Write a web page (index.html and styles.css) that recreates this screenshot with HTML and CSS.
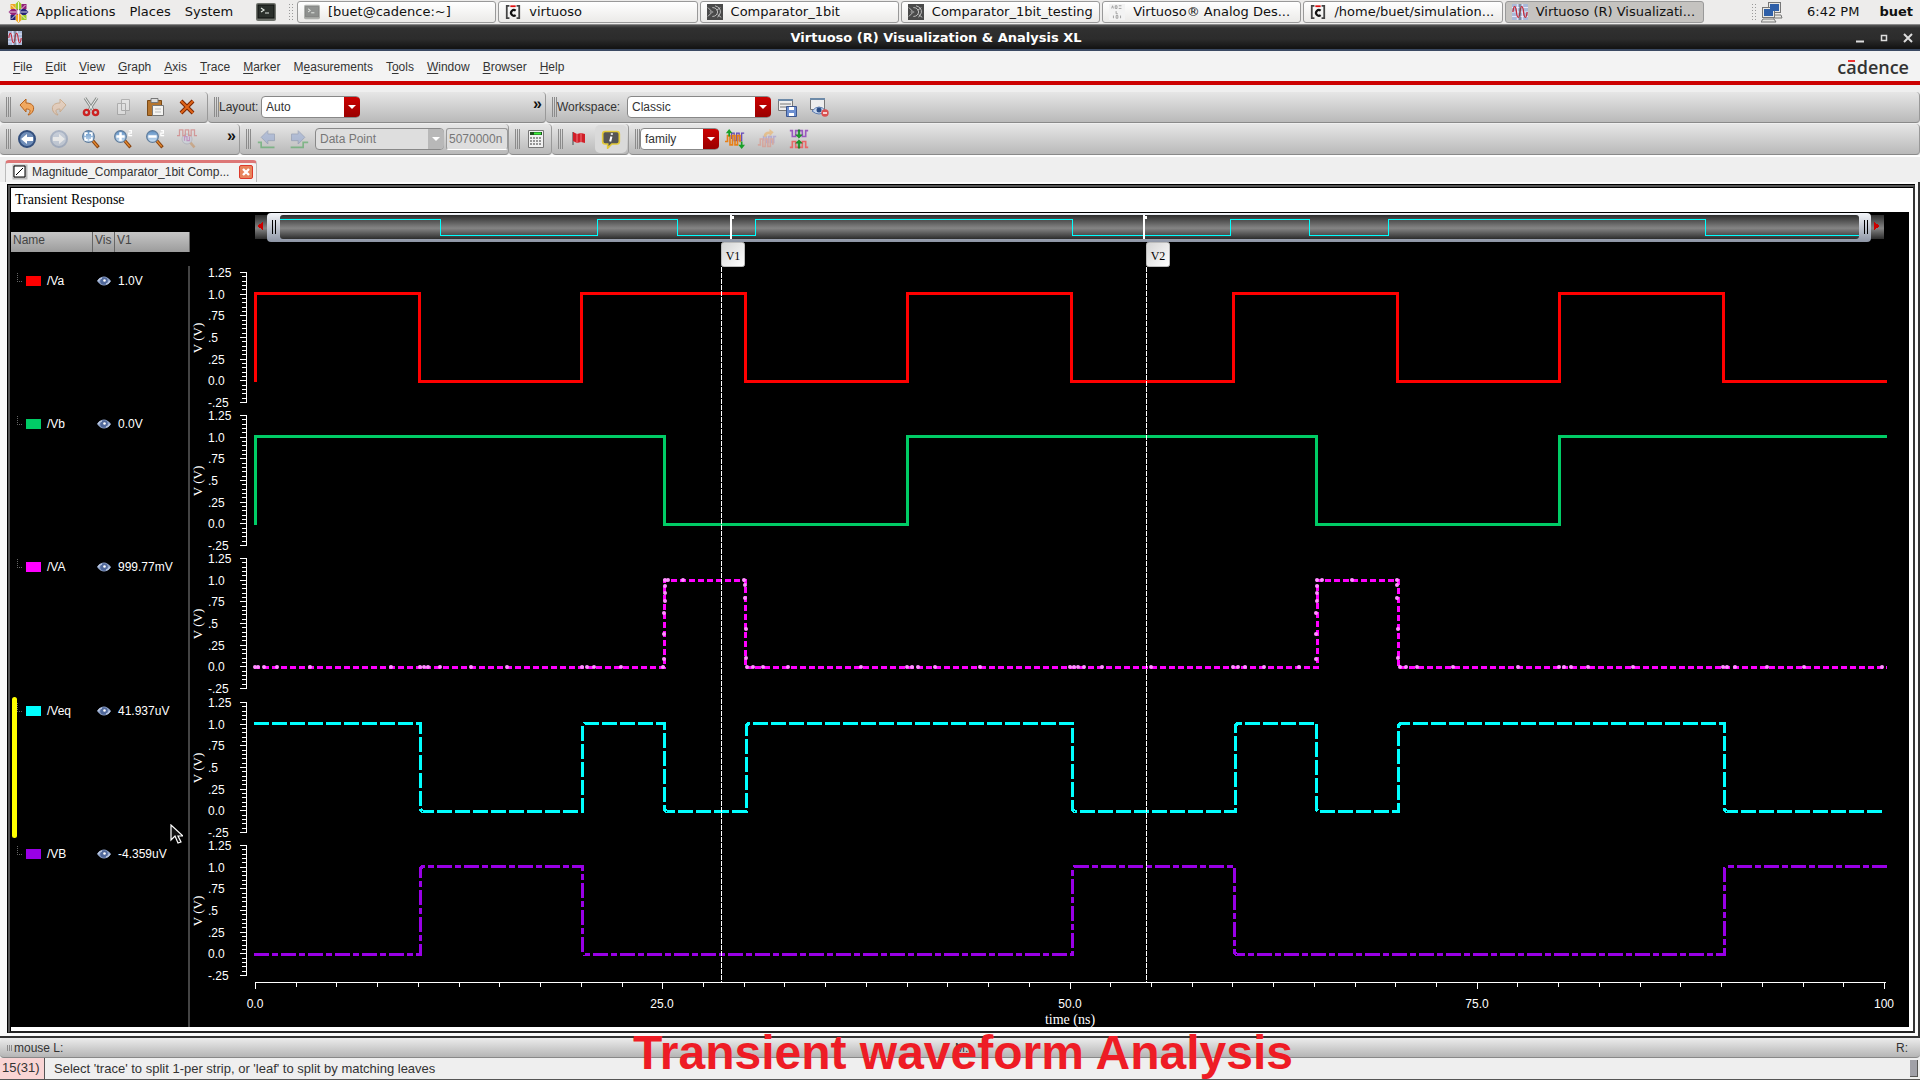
FILE: index.html
```html
<!DOCTYPE html>
<html lang="en">
<head>
<meta charset="utf-8">
<title>Virtuoso (R) Visualization &amp; Analysis XL</title>
<link rel="stylesheet" href="styles.css">
</head>
<body>
<svg class="defs" aria-hidden="true">
  <defs>
    <linearGradient id="lens" x1="0" y1="0" x2="0" y2="1"><stop offset="0" stop-color="#5d8fc4"/><stop offset="1" stop-color="#cfe2f3"/></linearGradient>
    <linearGradient id="slot" x1="0" y1="0" x2="0" y2="1"><stop offset="0" stop-color="#2c2c2c"/><stop offset=".55" stop-color="#858585"/><stop offset="1" stop-color="#2c2c2c"/></linearGradient>
    <linearGradient id="chrome" x1="0" y1="0" x2="0" y2="1"><stop offset="0" stop-color="#f4f6fa"/><stop offset="1" stop-color="#8d95a5"/></linearGradient>
    <linearGradient id="flagfill" x1="0" y1="0" x2="1" y2="1"><stop offset="0" stop-color="#d4d4d4"/><stop offset="1" stop-color="#fff"/></linearGradient>
    <symbol id="i-term" viewBox="0 0 20 20"><rect x="0" y="1" width="20" height="18" rx="2" fill="#6f736d"/><rect x="2" y="3" width="16" height="13" fill="#2b302c" stroke="#101210"/><path d="M5 6l3 2-3 2M9 11h4" fill="none" stroke="#dfe6df" stroke-width="1.2"/></symbol>
    <symbol id="i-cad" viewBox="0 0 18 18"><path d="M5 2H2v14h3M13 2h3v14h-3" fill="none" stroke="#444" stroke-width="2"/><path d="M12 7.500a3.200 3.200 0 1 0 0 5" fill="none" stroke="#111" stroke-width="2.400"/><path d="M6 2.500h6" stroke="#e01010" stroke-width="2"/></symbol>
    <symbol id="i-gate" viewBox="0 0 18 18"><rect width="18" height="18" fill="#4a4a4a"/><path d="M1 4l4 4M1 14l4-4M3 9h4M6 4q5 0 6 5-1 5-6 5M9 2q7 2 6 8l-3 5M11 7l4-3M12 12l4 3" fill="none" stroke="#ccc"/></symbol>
    <symbol id="i-wave" viewBox="0 0 18 18"><rect width="18" height="18" fill="#a9b9d8"/><path d="M0 4h18M0 9h18M0 14h18M6 0v18M12 0v18" stroke="#eef" stroke-width="1"/><path d="M1 9c1-8 3-8 4 0s3 8 4 0 3-8 4 0 3 8 4 0" fill="none" stroke="#c22c3c" stroke-width="1.500"/><path d="M9 0v18" stroke="#555"/></symbol>
    <symbol id="i-ade" viewBox="0 0 18 18"><rect width="18" height="18" fill="#f3f3f3"/><path d="M3 5l1-3 1 3M7 2v3h2V2zM11 2h3M11 5h3M8 8v3h2M5 13v3M8 13h2v3H8zM13 13v3" fill="none" stroke="#999"/></symbol>
    <symbol id="i-mag" viewBox="0 0 24 24"><path d="M14 14l7 8" stroke="#8a4513" stroke-width="4"/><path d="M14 14l6 7" stroke="#e88b2e" stroke-width="1.500"/><circle cx="9" cy="9" r="7" fill="url(#lens)" stroke="#5f7c9c" stroke-width="1.500"/></symbol>
    <symbol id="i-eye" viewBox="0 0 14 10"><path d="M0 5q7-9 14 0q-7 9-14 0z" fill="#8fa3c8"/><circle cx="7" cy="5" r="3.800" fill="#50689a"/><circle cx="7.500" cy="4.500" r="1.300" fill="#fff"/><path d="M1 5q2-3 4-3M13 5q-2 3-4 3" stroke="#b8c6e0" fill="none" stroke-width="1.500"/></symbol>
  </defs>
</svg>

<header class="panel">
  <nav class="panel-menu" aria-label="Desktop">
    <svg class="logo" viewBox="0 0 20 22"><path d="M10 0l3 3v6H7V3z" fill="#9ccd2a"/><path d="M20 11l-3 3h-6V8h6z" fill="#262577"/><path d="M10 22l-3-3v-6h6v6z" fill="#efa724"/><path d="M0 11l3-3h6v6H3z" fill="#932279"/><path d="M2 3h5v5H2z" fill="#efa724"/><path d="M13 3h5v5h-5z" fill="#932279"/><path d="M18 19h-5v-5h5z" fill="#9ccd2a"/><path d="M2 19v-5h5v5z" fill="#262577"/><path d="M10 1v20M1 11h18M3 4l14 14M17 4L3 18" stroke="#fff" stroke-width=".8"/></svg>
    <a href="#applications">Applications</a><a href="#places">Places</a><a href="#system">System</a>
    <svg class="term"><use href="#i-term"/></svg>
  </nav>
  <span class="dots"></span>
  <div class="tasks">
    <button><svg class="dim"><use href="#i-term"/></svg><span>[buet@cadence:~]</span></button>
    <button><svg><use href="#i-cad"/></svg><span>virtuoso</span></button>
    <button><svg><use href="#i-gate"/></svg><span>Comparator_1bit</span></button>
    <button><svg><use href="#i-gate"/></svg><span>Comparator_1bit_testing</span></button>
    <button><svg><use href="#i-ade"/></svg><span>Virtuoso® Analog Des...</span></button>
    <button><svg><use href="#i-cad"/></svg><span>/home/buet/simulation...</span></button>
    <button class="active"><svg><use href="#i-wave"/></svg><span>Virtuoso (R) Visualizati...</span></button>
  </div>
  <span class="dots"></span>
  <svg class="net" viewBox="0 0 22 22"><g stroke="#777" fill="#e8e8e4"><rect x="7.500" y="1.500" width="12" height="10"/><path d="M9 14h11l1 3h-9z"/><rect x="1.500" y="6.500" width="12" height="10"/><path d="M2 18h11l2 3H0z"/></g><path d="M9 3h9v7H9zM3 8h9v7H3z" fill="#2e5fa8"/></svg>
  <time>6:42 PM</time><b class="user">buet</b>
</header>

<div class="titlebar">
  <svg class="app"><use href="#i-wave"/></svg>
  <h1>Virtuoso (R) Visualization &amp; Analysis XL</h1>
  <div class="winctl">
    <button aria-label="Minimize"><svg viewBox="0 0 10 10"><path d="M1 8.500h8" stroke="#ddd" stroke-width="2"/></svg></button>
    <button aria-label="Maximize"><svg viewBox="0 0 10 10"><path d="M2.500 2.500h5v5h-5z" fill="none" stroke="#ddd" stroke-width="1.500"/></svg></button>
    <button aria-label="Close"><svg viewBox="0 0 10 10"><path d="M1 1l8 8M9 1l-8 8" stroke="#ddd" stroke-width="2"/></svg></button>
  </div>
</div>

<nav class="menubar">
  <a href="#file"><u>F</u>ile</a><a href="#edit"><u>E</u>dit</a><a href="#view"><u>V</u>iew</a><a href="#graph"><u>G</u>raph</a><a href="#axis"><u>A</u>xis</a><a href="#trace"><u>T</u>race</a><a href="#marker"><u>M</u>arker</a><a href="#meas">M<u>e</u>asurements</a><a href="#tools">T<u>o</u>ols</a><a href="#window"><u>W</u>indow</a><a href="#browser"><u>B</u>rowser</a><a href="#help"><u>H</u>elp</a>
  <span class="brand">c<span class="bar">a</span>dence</span>
</nav>

<div class="toolbars">
  <div class="toolrow">
    <section class="w-edit"><i class="grip"></i>
      <button aria-label="Undo"><svg viewBox="0 0 20 20"><path d="M3 8l6-6v4c6 0 9 3 7 8-1 2-3 4-5 4 3-4 3-6-2-6v3z" fill="#f0a860" stroke="#b5601a"/></svg></button>
      <button aria-label="Redo" disabled><svg viewBox="0 0 20 20"><path d="M17 8l-6-6v4c-6 0-9 3-7 8 1 2 3 4 5 4-3-4-3-6 2-6v3z" fill="#f0c8a8" stroke="#c58a50"/></svg></button>
      <button aria-label="Cut"><svg viewBox="0 0 20 20"><path d="M4 1l8 12M16 1L8 13" stroke="#8a8f8c" stroke-width="3"/><path d="M4 1l8 12M16 1L8 13" stroke="#f2f2f2"/><g fill="none" stroke="#cc2222" stroke-width="2.400"><circle cx="5.500" cy="15.500" r="2.600"/><circle cx="14.500" cy="15.500" r="2.600"/></g></svg></button>
      <button aria-label="Copy" disabled><svg viewBox="0 0 20 20"><path d="M8.500 2.500h8v11h-8zM4.500 6.500h8v11h-8z" fill="#eee" stroke="#888"/></svg></button>
      <button aria-label="Paste"><svg viewBox="0 0 20 20"><path d="M2.500 3.500h14v15h-14z" fill="#b5752e" stroke="#7a4a17"/><path d="M6 1.500h7v4H6z" fill="#ddd" stroke="#777"/><path d="M7.500 8.500h11v10h-11z" fill="#f4f4f2" stroke="#777"/><path d="M10 12h6M10 15h6" stroke="#bbb"/></svg></button>
      <button aria-label="Delete"><svg viewBox="0 0 20 20"><path d="M4 4l12 12M16 4L4 16" stroke="#7a2500" stroke-width="4"/><path d="M4 4l12 12M16 4L4 16" stroke="#e0651a" stroke-width="2"/></svg></button>
    </section>
    <section class="w-layout"><i class="grip"></i>
      <label for="layout">Layout:</label><span class="combo c-layout"><select id="layout"><option>Auto</option></select></span>
      <span class="more">»</span>
    </section>
    <section class="grow"><i class="grip"></i>
      <label class="ws" for="workspace">Workspace:</label><span class="combo c-ws"><select id="workspace"><option>Classic</option></select></span>
      <button aria-label="Save workspace"><svg viewBox="0 0 20 20"><path d="M1.500 2.500h14v11h-14z" fill="#eee" stroke="#777"/><path d="M1 3h15" stroke="#6d8aa8" stroke-width="2"/><path d="M3 7h11M3 10h9" stroke="#777"/><path d="M9.500 9.500h10v10h-10z" fill="#6d8fd0" stroke="#3c568e"/><path d="M12 10h5v3h-5zM12 16h5v3h-5z" fill="#fff"/></svg></button>
      <button aria-label="Delete workspace"><svg viewBox="0 0 20 20"><path d="M1.500 1.500h14v11h-14z" fill="#eee" stroke="#777"/><path d="M1 2h15" stroke="#6d8aa8" stroke-width="2"/><path d="M3 14q7-8 14 0q-7 6-14 0z" fill="#c9d8ee" stroke="#5a79ad"/><circle cx="10" cy="13" r="2.500" fill="#2b4d86"/><circle cx="16" cy="16" r="3.700" fill="#d95050"/><path d="M14 16h4" stroke="#fff" stroke-width="1.500"/></svg></button>
    </section>
  </div>
  <div class="toolrow">
    <section class="w-zoom"><i class="grip"></i>
      <button aria-label="Back"><svg viewBox="0 0 20 20"><circle cx="10" cy="10" r="8" fill="#6f8db8" stroke="#334f7d" stroke-width="2"/><path d="M4 10l6-5v3h6v4h-6v3z" fill="#fff"/></svg></button>
      <button aria-label="Forward" disabled><svg viewBox="0 0 20 20"><circle cx="10" cy="10" r="8" fill="#b5c3d8" stroke="#7c8fb0" stroke-width="2"/><path d="M16 10l-6-5v3H4v4h6v3z" fill="#fff"/></svg></button>
      <button aria-label="Fit"><svg viewBox="0 0 24 24"><use href="#i-mag"/><path d="M5 8V5h3M10 5h3v3M13 10v3h-3M8 13H5v-3" stroke="#fff" stroke-width="2" fill="none"/></svg></button>
      <button aria-label="Zoom in"><svg viewBox="0 0 24 24"><use href="#i-mag"/><path d="M4 9h10M9 4v10" stroke="#fff" stroke-width="3"/><path d="M19 2h3v3h-3v3h4" stroke="#fff" fill="none" stroke-width="1.500"/></svg></button>
      <button aria-label="Zoom out"><svg viewBox="0 0 24 24"><use href="#i-mag"/><path d="M4 9h10" stroke="#fff" stroke-width="3"/><path d="M19 2h3v3h-3v3h4" stroke="#fff" fill="none" stroke-width="1.500"/></svg></button>
      <button aria-label="Zoom wave" disabled><svg viewBox="0 0 24 24"><path d="M14 14l7 8" stroke="#c88a50" stroke-width="3"/><circle cx="12" cy="12" r="6" fill="#ccd8e4" stroke="#99a"/><path d="M0 8h3V1h4v7h3V1h4v7h3V1h4v7h3" stroke="#cc5a5a" stroke-width="1.500" fill="none"/><path d="M9 14v-5h3v5h3v-5" stroke="#b35ab3" stroke-width="1.500" fill="none"/></svg></button>
      <span class="more">»</span>
    </section>
    <section class="w-point"><i class="grip"></i>
      <button aria-label="Previous" disabled><svg viewBox="0 0 24 24"><path d="M1 16h4v6h16" stroke="#3aa34a" stroke-width="2" fill="none"/><path d="M5 10l8-8v4h8v8h-8v4z" fill="#8ea5d5" stroke="#66789f"/></svg></button>
      <button aria-label="Next" disabled><svg viewBox="0 0 24 24"><path d="M2 22h15v-6h6" stroke="#3aa34a" stroke-width="2" fill="none"/><path d="M19 10l-8-8v4H3v8h8v4z" fill="#8ea5d5" stroke="#66789f"/></svg></button>
      <span class="combo off c-point"><select aria-label="Step by" disabled><option>Data Point</option></select></span>
      <input class="step" aria-label="Step size" value="5070000n" disabled>
    </section>
    <section class="w-calc"><i class="grip"></i>
      <button aria-label="Calculator"><svg viewBox="0 0 20 20"><path d="M2.500 1.500h15v17h-15z" fill="#f1f1f1" stroke="#777"/><path d="M4 3h12v3H4z" fill="#1e501e"/><path d="M8 4.500h7" stroke="#3cf03c" stroke-width="2"/><path d="M4 9h12M4 12h12M4 15h12" stroke="#777" stroke-width="1.500" stroke-dasharray="2 1"/></svg></button>
    </section>
    <section class="w-flag"><i class="grip"></i>
      <button aria-label="Flag"><svg viewBox="0 0 20 20"><path d="M4 3v13" stroke="#888" stroke-width="2"/><path d="M4 3l4 2 4-1 4 1v9l-4-1-4 1-4-2z" fill="#d11f28"/><path d="M8 5v9M12 4v9" stroke="#f0757b"/></svg></button>
      <button class="on" aria-label="Info balloon"><svg viewBox="0 0 24 24"><path d="M5 3h14q3 0 3 3v9q0 3-3 3h-6l-5 5v-5H5q-3 0-3-3V6q0-3 3-3z" fill="#555" stroke="#e2c93a" stroke-width="2"/><path d="M13 5v2M12.500 9l-1.500 6" stroke="#fff" stroke-width="2.500"/></svg></button>
    </section>
    <section class="grow"><i class="grip"></i>
      <span class="combo c-fam"><select aria-label="Group by"><option>family</option></select></span>
      <button aria-label="Split"><svg viewBox="0 0 24 24"><path d="M8 12V5h3v9h3V5h3v9h3V5h3" stroke="#6248b8" stroke-width="1.500" fill="none"/><path d="M0 15h3V8h3v11h3V8h3v11h3V8h3v8" stroke="#e88018" stroke-width="2" fill="none"/><path d="M5 0l4 5H6v4H4V5H1zM20 24l-4-5h3v-4h2v4h3z" fill="#18a028"/></svg></button>
      <button aria-label="Combine" disabled><svg viewBox="0 0 24 24"><path d="M8 14V9h3v7h3V9h3v7h3V9h3" stroke="#9a88d0" stroke-width="2" fill="none"/><path d="M1 19h3v-7h3v9h3v-9h3v9h3v-9h3v7" stroke="#e08878" stroke-width="2" fill="none"/><path d="M8 9q0-6 7-6V0l5 4-5 5V6q-4 0-4 4z" fill="#f0a848"/></svg></button>
      <button aria-label="Merge"><svg viewBox="0 0 24 24"><path d="M1 2h3v7h4V2h8v7h4V2h3" stroke="#9a58c0" stroke-width="2" fill="none"/><path d="M1 22h3v-7h4v7h8v-7h4v7h3" stroke="#e86868" stroke-width="2" fill="none"/><path d="M12 11L8 7h3V1h2v6h3zM12 13l-4 4h3v6h2v-6h3z" fill="#18a028" stroke="#0c6018" stroke-width=".5"/></svg></button>
    </section>
  </div>
</div>

<div class="tabs">
  <div class="tab">
    <svg viewBox="0 0 16 16"><path d="M.5.5h15v15H.5z" fill="#bbb"/><path d="M2 2h11v11H2z" fill="#fff" stroke="#000"/><path d="M4 11l7-7" stroke="#000"/></svg>
    <span>Magnitude_Comparator_1bit Comp...</span>
    <button aria-label="Close tab"><svg viewBox="0 0 14 14"><rect x=".5" y=".5" width="13" height="13" rx="1.500" fill="#e8845c" stroke="#dd3a2c"/><path d="M4 4l6 6M10 4l-6 6" stroke="#fff" stroke-width="2.400"/></svg></button>
  </div>
</div>

<main class="mdi">
  <div class="frame"><div class="graph">
    <h2>Transient Response</h2>
    <div class="body">
      <div class="legend">
        <div class="cols"><span class="c1">Name</span><span class="c2">Vis</span><span class="c3">V1</span></div>
        <ul>
          <li class="va"><i class="tree"></i><i class="sw"></i><span class="n">/Va</span><svg><use href="#i-eye"/></svg><span>1.0V</span></li>
          <li class="vb"><i class="tree"></i><i class="sw"></i><span class="n">/Vb</span><svg><use href="#i-eye"/></svg><span>0.0V</span></li>
          <li class="vaa"><i class="tree"></i><i class="sw"></i><span class="n">/VA</span><svg><use href="#i-eye"/></svg><span>999.77mV</span></li>
          <li class="veq"><i class="tree"></i><i class="sw"></i><span class="n">/Veq</span><svg><use href="#i-eye"/></svg><span>41.937uV</span>
            <svg class="pointer" viewBox="0 0 13 20"><path d="M1 1v15l4-4 3 7 3-1-3-6h5z" fill="#111" stroke="#fff" stroke-width="1.200"/></svg></li>
          <li class="vbb"><i class="tree"></i><i class="sw"></i><span class="n">/VB</span><svg><use href="#i-eye"/></svg><span>-4.359uV</span></li>
        </ul>
      </div>
      <svg id="plot" class="plot" viewBox="190 212 1719 815"></svg>
    </div>
  </div></div>
</main>

<footer>
  <div class="mouse"><i class="grip"></i><span>mouse L:</span><span>M:</span><span>R:</span></div>
  <div class="status"><span class="count">15(31)</span><span class="hint">Select 'trace' to split 1-per strip, or 'leaf' to split by matching leaves</span><i class="size"></i></div>
</footer>
<p class="caption">Transient waveform Analysis</p>
<script src="plot.js"></script>
</body>
</html>
```
FILE: styles.css
```css
* { box-sizing: border-box; }
body {
  margin: 0;
  position: relative;
  background: #efefef;
  color: #333;
  font: 12px/16px "Liberation Sans", Arial, sans-serif;
}
a { color: inherit; text-decoration: none; }
button { padding: 0; border: 0; background: none; color: inherit; font: inherit; }
ul, h1, h2, p { margin: 0; padding: 0; font-weight: normal; list-style: none; }
.defs { position: absolute; width: 0; height: 0; }

/* desktop panel */
.panel {
  display: flex;
  align-items: center;
  height: 25px;
  padding: 0 7px 0 8px;
  background: #edeceb;
  border-bottom: 1px solid #888;
  color: #111;
  font: 13px/20px "DejaVu Sans", sans-serif;
}
.panel-menu { display: flex; align-items: center; gap: 14px; width: 280px; }
.logo { width: 21px; height: 22px; margin-right: -7px; }
.term { width: 20px; height: 20px; margin-left: 9px; }
.dots {
  width: 6px;
  height: 18px;
  background: radial-gradient(#999 1px, transparent 1px) 0 0 / 3px 3px;
}
.tasks { display: flex; gap: 2px; width: 1407px; margin: 0 47px 0 3px; }
.tasks button {
  display: flex;
  flex: 1;
  align-items: center;
  gap: 8px;
  min-width: 0;
  height: 22px;
  padding: 0 6px;
  border: 1px solid #999;
  border-radius: 3px;
  background: linear-gradient(#fff, #ebeae8);
  white-space: nowrap;
}
.tasks .active { background: #c5c3c0; }
.tasks svg { flex: none; width: 16px; height: 16px; }
.tasks .dim { opacity: .5; }
.net { width: 22px; height: 22px; margin-left: 4px; }
.panel time { margin-left: 24px; }
.user { margin-left: auto; }

.titlebar {
  display: flex;
  align-items: center;
  height: 26px;
  padding: 2px 7px 0;
  background: linear-gradient(#555 0, #303030 3px, #2c2c2c 14px, #141414 23px);
  border-bottom: 2px solid #3b4a63;
  color: #fff;
}
.titlebar .app { width: 16px; height: 14px; }
.titlebar h1 { flex: 1; padding-right: 6px; text-align: center; font: bold 13px/20px "DejaVu Sans", sans-serif; }
.winctl { display: flex; gap: 14px; }
.winctl svg { display: block; width: 10px; height: 10px; }

.menubar {
  display: flex;
  align-items: center;
  gap: 13px;
  height: 34px;
  padding: 2px 11px 0 13px;
  background: #f3f3f3;
  border-bottom: 4px solid #c00;
}
.menubar u { text-underline-offset: 2px; }
.brand { margin-left: auto; color: #333; font: 600 18px/20px "Open Sans", sans-serif; }
.bar { position: relative; }
.bar::before { content: ""; position: absolute; top: 5px; left: 2px; width: 7px; height: 2px; background: #e33; }

/* tool bars */
.toolbars { display: grid; gap: 1px; padding-top: 7px; border-bottom: 2px solid #fff; }
.toolrow { display: flex; height: 31px; }
.toolrow section {
  display: flex;
  flex: none;
  align-items: center;
  padding-left: 6px;
  background: linear-gradient(#e6e6e6, #b9b9b9);
  border-right: 1px solid #999;
  border-bottom: 1px solid #8a8a8a;
  border-radius: 4px;
}
.toolrow .grow { flex: 1; }
.grip {
  flex: none;
  width: 5px;
  height: 20px;
  background: repeating-linear-gradient(90deg, #8b8b8b 0 1px, transparent 1px 2px);
}
.toolrow button { flex: none; width: 32px; height: 28px; border-radius: 5px; }
.toolrow button svg { display: block; width: 20px; height: 20px; margin: 0 auto; }
.toolrow button:disabled { opacity: .5; }
.toolrow .on { background: #dadada; }
.w-edit { width: 208px; }
.w-layout { width: 338px; }
.w-zoom { width: 240px; }
.w-point { width: 269px; }
.w-calc { width: 43px; }
.w-flag { width: 77px; }
.more { margin: 0 3px 6px auto; color: #111; font: bold 16px/16px "Liberation Sans", sans-serif; }
.toolrow label { width: 42px; }
.toolrow .ws { width: 70px; }
.combo { position: relative; height: 22px; }
.combo select {
  width: 100%;
  height: 22px;
  padding: 0 4px;
  border: 1px solid #888;
  border-radius: 4px;
  appearance: none;
  background: #fff;
  color: #333;
  font: inherit;
}
.combo::before {
  content: "";
  position: absolute;
  top: 1px; right: 0; bottom: 1px;
  width: 16px;
  border-radius: 0 4px 4px 0;
  background: linear-gradient(#c00, #900);
  pointer-events: none;
}
.combo::after {
  content: "";
  position: absolute;
  top: 9px; right: 4px;
  border: 4px solid transparent;
  border-top-color: #fff;
  pointer-events: none;
}
.combo.off select { background: #dedede; color: #777; opacity: 1; }
.combo.off::before { background: #b8b8b8; }
.c-layout { width: 99px; }
.c-ws { width: 144px; }
.c-point { width: 129px; }
.c-fam { width: 79px; }
.step {
  width: 62px;
  height: 22px;
  margin-left: 2px;
  padding: 0 2px;
  border: 1px solid #999;
  border-bottom-color: #fff;
  border-radius: 3px;
  background: #dedede;
  color: #777;
  font: inherit;
}

.tabs { display: flex; height: 25px; padding: 3px 0 0 5px; }
.tab {
  display: flex;
  align-items: center;
  gap: 4px;
  width: 252px;
  padding: 0 3px 2px 6px;
  border: 1px solid #bbb;
  border-top: 3px solid #dd7777;
  border-bottom: 0;
  border-radius: 4px 4px 0 0;
  background: #f2f2f2;
  white-space: nowrap;
}
.tab svg { display: block; width: 16px; height: 16px; }
.tab button { margin-left: auto; }
.tab button svg { width: 14px; height: 14px; }

/* graph window */
.mdi { border: solid #333; border-width: 0 2px 2px 0; background: #fafafa; padding: 2px 3px 3px 7px; }
.frame { border: 4px double #000; border-right: 2px solid #333; border-bottom: 2px solid #222; background: #555; }
.graph { border: solid #fff; border-width: 0 4px 4px 0; background: #000; }
.graph h2 {
  height: 24px;
  padding-left: 4px;
  background: #fff;
  color: #000;
  font: 14px/24px "Liberation Serif", serif;
}
.body { display: flex; color: #fff; }
.legend { flex: none; width: 179px; padding-top: 20px; display: flex; flex-direction: column; }
.cols {
  display: flex;
  height: 20px;
  margin-bottom: 14px;
  background: linear-gradient(#c6c6c6, #9c9c9c);
  color: #444;
}
.cols span { padding-left: 2px; border-right: 1px solid #666; }
.c1 { width: 82px; }
.c2 { width: 22px; }
.c3 { flex: 1; }
.legend ul { flex: 1; border-right: 2px solid #444; }
.legend li {
  position: relative;
  display: flex;
  align-items: center;
  height: 16px;
  margin: 7px 0 127px;
  padding-left: 6px;
}
.legend li:nth-child(3) { margin-bottom: 128px; }
.legend li:last-child { margin-bottom: 0; }
.tree { width: 5px; height: 9px; margin-bottom: 8px; border: dotted #666; border-width: 0 0 1px 1px; }
.sw { width: 15px; height: 10px; margin: 0 6px 0 4px; }
.va .sw { background: #f00; }
.vb .sw { background: #00cc66; }
.vaa .sw { background: #f0f; }
.veq .sw { background: #0ff; }
.vbb .sw { background: #9900e6; }
.n { width: 50px; }
.legend li svg { width: 14px; height: 10px; margin-right: 7px; }
.veq::before {
  content: "";
  position: absolute;
  left: 1px; top: -6px;
  width: 5px; height: 141px;
  border-radius: 3px;
  background: #ff0;
}
.legend .pointer { position: absolute; left: 159px; top: 121px; width: 13px; height: 20px; margin: 0; }
.plot { flex: 1; min-width: 0; display: block; font: 12px "Liberation Sans", sans-serif; fill: #fff; }
.plot .serif { font-family: "Liberation Serif", serif; }
.plot .axis-name { font-size: 13px; }
.plot .time { font-size: 14px; }
.plot .mid { text-anchor: middle; }
.plot .tag { fill: #000; }
.plot path, .plot line { fill: none; stroke: #fff; shape-rendering: crispEdges; }
.plot .wave { stroke-width: 3; }
.plot .cursor { stroke-dasharray: 5 1; }
.plot .arrow { fill: #c00; stroke: none; }
.plot .ink { stroke: #000; }
.plot .mini { stroke: #0ff; }

/* status lines */
.mouse {
  display: flex;
  align-items: center;
  justify-content: space-between;
  height: 20px;
  padding: 0 12px 0 7px;
  background: linear-gradient(#ececec, #b5b5b5);
  border-bottom: 1px solid #888;
  border-radius: 4px;
}
.mouse .grip { height: 6px; margin-right: 2px; }
.mouse span:nth-child(2) { flex: 1; }
.mouse span:nth-child(3) { flex: 1; }
.status { display: flex; height: 22px; align-items: center; border-bottom: 1px solid #555; }
.count { width: 45px; height: 21px; padding: 2px; background: #f9d5d5; border-right: 1px solid #555; font-size: 13px; }
.hint { flex: 1; padding-left: 9px; font-size: 13px; }
.size { width: 8px; height: 17px; margin-right: 2px; background: #a0a0a8; border: solid #555; border-width: 0 1px 1px 0; }
.caption {
  position: absolute;
  left: 0; right: 0; bottom: 0;
  padding-left: 6px;
  text-align: center;
  color: #ee1c25;
  font: bold 48px/55px "Liberation Sans", Arial, sans-serif;
  pointer-events: none;
}
```
FILE: plot.js
```js
const svg = document.getElementById('plot');
const NS = 'http://www.w3.org/2000/svg';

function add(tag, attrs, text) {
  const el = document.createElementNS(NS, tag);
  for (const key in attrs) el.setAttribute(key, attrs[key]);
  if (text) el.textContent = text;
  svg.appendChild(el);
  return el;
}

// Square wave that toggles between two levels at each edge.
// settle rounds the corner after each edge by that many pixels.
function square(start, end, edges, first, high, low, settle = 0) {
  let level = first;
  let d = `M${start} ${level ? high : low}`;
  for (const x of edges) {
    level = !level;
    const s = level ? settle : -settle;
    d += `H${x}V${(level ? high : low) + s}l${settle} ${-s}`;
  }
  return d + `H${end}`;
}

// overview slider
add('rect', { x: 255, y: 215, width: 1629, height: 24, fill: 'url(#slot)' });
add('path', { class: 'arrow', d: 'M257 226l6-4v8zM1880 226l-6-4v8z' });
add('rect', { x: 267, y: 213, width: 1604, height: 29, rx: 4, fill: 'url(#chrome)' });
add('rect', { x: 280, y: 215, width: 1579, height: 24, rx: 3, fill: 'url(#slot)' });
add('path', { class: 'ink', d: 'M272.5 220v14M275.5 220v14M1864.5 220v14M1867.500 220v14' });
add('path', { class: 'mini', d: square(280, 1859, [440.5, 597.5, 677.5, 755.5, 1072.5, 1230.5, 1309.5, 1388.5, 1705.5], true, 219.5, 235.5) });
add('path', { 'stroke-width': 2, d: 'M731 215v24M1144 215v24' });
add('path', { 'stroke-width': 3, d: 'M731 217.5h3M1144 217.500h3' });

// five strips, one per signal
const names = ['1.25', '1.0', '.75', '.5', '.25', '0.0', '-.25'];
[272, 415, 558, 702, 845].forEach(top => {
  let d = `M246.5 ${top}v131`;
  for (let i = 0; i <= 30; i++) {
    const y = top + Math.round(i * 130 / 30) + 0.5;
    d += `M${i % 5 ? 242 : 240} ${y}H246`;
  }
  add('path', { d });
  names.forEach((name, i) => add('text', { x: 208, y: top + 5 + Math.round(i * 130 / 6) }, name));
  add('text', { class: 'serif axis-name mid', transform: `translate(202 ${top + 66}) rotate(-90)` }, 'V (V)');
});

const waves = [
  ['#f00', 293.5, 381.5, false, [255.5, 419.5, 581.5, 745.5, 907.5, 1071.5, 1233.5, 1397.5, 1559.5, 1723.5], 1887, '', 0],
  ['#00cc66', 436.5, 524.5, false, [255.5, 664.5, 907.5, 1316.5, 1559.5], 1887, '', 0],
  ['#f0f', 580.5, 667.5, false, [664.5, 745.5, 1317.5, 1398.5], 1887, '6 3', 0],
  ['#0ff', 723.5, 811.5, true, [420.5, 582.5, 664.5, 746.5, 1072.5, 1235.5, 1316.5, 1398.5, 1724.5], 1882, '15 3', 2],
  ['#9900e6', 866.5, 954.5, false, [420.5, 582.5, 1072.5, 1234.5, 1724.5], 1887, '15 3 6 3', 2]
];
waves.forEach(([color, high, low, first, edges, end, dash, settle]) =>
  add('path', { class: 'wave', d: square(edges[0] < 256 ? 255.5 : 254, end, edges, first, high, low, settle), style: `stroke:${color}`, 'stroke-dasharray': dash || 'none' }));

// sampled points of the /VA trace
const dot = (x, y) => add('circle', { cx: x, cy: y, r: 2, fill: '#ff90ff' });
[255, 258, 264, 277, 310, 391, 420, 424, 428, 440, 471, 507, 582, 587, 594, 621, 663, 747, 753, 763, 788, 861, 907, 912, 918, 935, 980, 1070, 1074, 1078, 1084, 1102, 1151, 1233, 1238, 1245, 1264, 1299, 1400, 1406, 1417, 1453, 1518, 1559, 1564, 1571, 1588, 1633, 1723, 1727, 1735, 1767, 1804, 1882].forEach(x => dot(x, 667));
[665, 668, 683, 744, 1317, 1322, 1352, 1397].forEach(x => dot(x, 580));
[[665, 586], [665, 593], [665, 601], [664, 613], [664, 634], [664, 659], [745, 585], [745, 598], [746, 629], [746, 658]].forEach(([x, y]) => { dot(x, y); dot(x + 652, y); });

// cursors
[[721.5, 'V1'], [1146.5, 'V2']].forEach(([x, name]) => {
  add('line', { class: 'cursor', x1: x, y1: 267, x2: x, y2: 982 });
  add('rect', { x, y: 242.5, width: 23, height: 24, rx: 2, fill: 'url(#flagfill)', stroke: '#bbb' });
  add('text', { class: 'serif mid tag', x: x + 11.5, y: 260 }, name);
});

// time axis
let axis = 'M255 982.5H1886';
for (let i = 0; i <= 40; i++) axis += `M${Math.round(255 + i * 1629 / 40) + 0.5} 983v${i % 10 ? 4 : 6}`;
add('path', { d: axis });
['0.0', '25.0', '50.0', '75.0', '100'].forEach((label, i) =>
  add('text', { class: 'mid', x: Math.round(255 + i * 1629 / 4), y: 1008 }, label));
add('text', { class: 'serif time mid', x: 1070, y: 1024 }, 'time (ns)');
```
